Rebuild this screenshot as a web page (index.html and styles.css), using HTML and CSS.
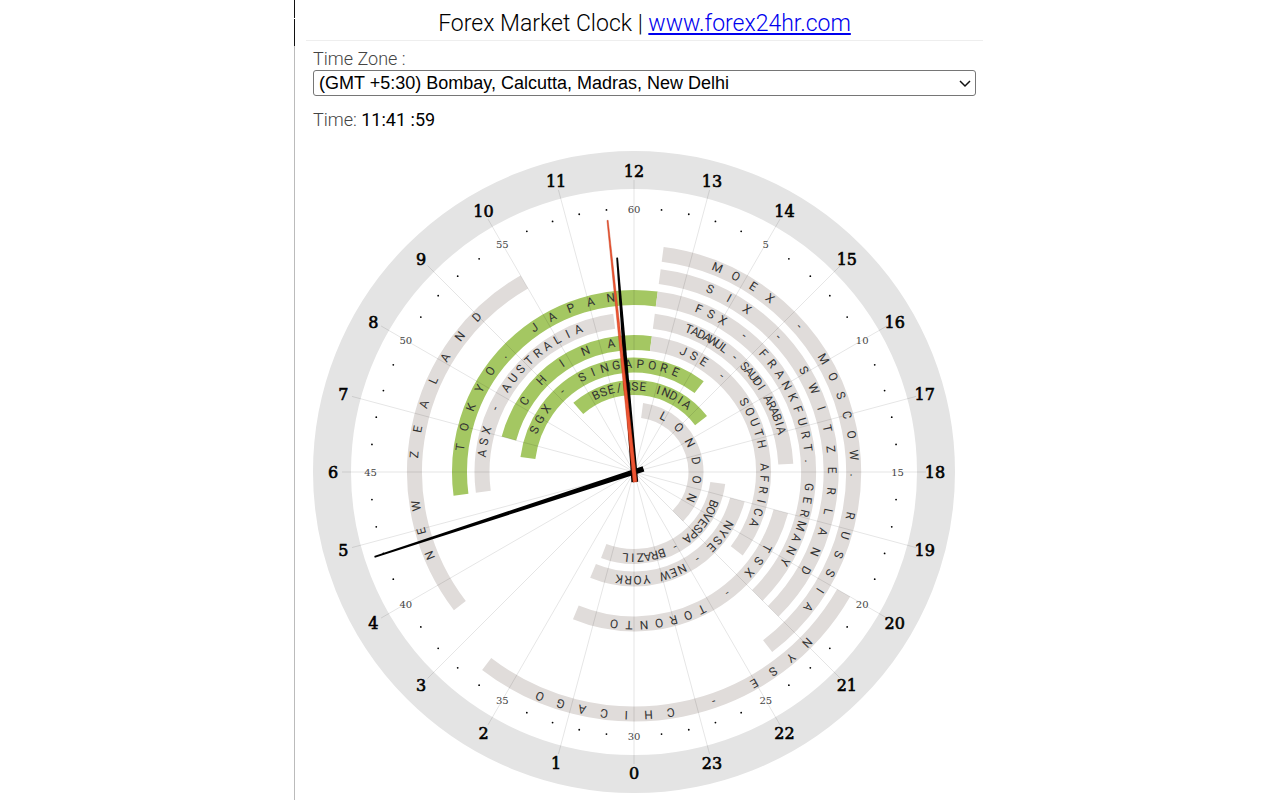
FILE: index.html
```html
<!DOCTYPE html>
<html lang="en">
<head>
    <meta charset="UTF-8">
    <meta name="viewport" content="width=device-width, initial-scale=1.0">
    <title>Forex Market Clock</title>
    <link rel="stylesheet" href="styles.css">
</head>
<body>

    <main class="panel">
        <h1 class="title">Forex Market Clock | <a href="#">www.forex24hr.com</a></h1>

        <div class="content">
            <label class="label" for="timezone">Time Zone :</label>
            <div class="select-wrap">
                <select id="timezone">
                    <option selected>(GMT +5:30) Bombay, Calcutta, Madras, New Delhi</option>
                    <option>(GMT) Western Europe Time, London, Lisbon</option>
                    <option>(GMT -5:00) Eastern Time (US &amp; Canada)</option>
                </select>
                <svg class="chevron" viewBox="0 0 12 8"><path d="M1 1l5 5 5-5"/></svg>
            </div>
            <p class="time">Time: <span class="time-value"></span></p>
            <svg class="clock" viewBox="-321 -321 642 642" role="img" aria-label="24 hour market clock">
                <circle class="ring" r="302"/>
                <g class="bands"></g>
                <g class="spokes"></g>
                <g class="names"></g>
                <g class="minutes"></g>
                <g class="hours"></g>
                <polygon class="hand hand-minute" points="-0.9,-273 0.9,-273 2.8,10 -2.8,10"/>
                <polygon class="hand hand-hour" points="-0.9,-215 0.9,-215 3.4,10 -3.4,10"/>
                <polygon class="hand hand-second" points="-0.6,-253 0.6,-253 2,10 -2,10"/>
            </svg>
        </div>
    </main>

    <script src="clock.js"></script>

</body>
</html>
```
FILE: styles.css
```css
body {
    margin: 0;
    background: #fff;
    color: #000;
    font-family: Roboto, sans-serif;
}

.panel {
    position: relative;
    box-sizing: border-box;
    max-width: 692px;
    min-height: 100vh;
    margin: 0 auto;
    padding: 0 3px 0 12px;
}

/* window edge on the left side */
.panel::before {
    content: "";
    position: absolute;
    top: 0;
    bottom: 0;
    left: 0;
    width: 1px;
    background: linear-gradient(#111 18px, #fff 18px, #fff 19px, #111 19px, #111 46px, #bbb 46px);
}

.title {
    margin: 0;
    height: 40px;
    border-bottom: 1px solid #eee;
    font-size: 23px;
    font-weight: 300;
    line-height: 48px;
    text-align: center;
}

.title a {
    color: #0000ee;
}

.content {
    padding: 7px 7px 0;
}

.label, .time {
    display: block;
    margin: 0;
    font-size: 18px;
    font-weight: 300;
    line-height: 22px;
    color: #444;
}

.select-wrap {
    position: relative;
}

select {
    display: block;
    appearance: none;
    width: 100%;
    height: 26px;
    padding: 0 24px 0 5px;
    border: 1px solid #767676;
    border-radius: 3px;
    background: #fff;
    color: #000;
    font-family: "Liberation Sans", Arial, sans-serif;
    font-size: 18px;
}

.chevron {
    position: absolute;
    top: 10px;
    right: 5px;
    width: 12px;
    height: 8px;
    fill: none;
    stroke: #111;
    stroke-width: 1.5;
    pointer-events: none;
}

.time {
    margin-top: 13px;
}

.time-value {
    color: #000;
    font-weight: 400;
}

.clock {
    display: block;
    width: 100%;
    max-width: 642px;
    margin-top: 20px;
}

.ring {
    fill: #fff;
    stroke: #e4e4e4;
    stroke-width: 38;
}

.band {
    fill: none;
    stroke: #e0dcda;
    stroke-width: 15;
}

.band.open {
    stroke: #a4c762;
}

.spoke {
    stroke: #000;
    stroke-opacity: 0.1;
}

.name {
    fill: #333;
    font-family: Roboto, sans-serif;
    font-size: 12px;
    white-space: pre;
}

.hour-mark, .minute-mark {
    font-family: Georgia, "DejaVu Serif", serif;
    text-anchor: middle;
}

.hour-mark {
    font-size: 16px;
    stroke: #000;
    stroke-width: 0.6;
}

.minute-mark {
    fill: #444;
    font-size: 10px;
}

.dot {
    fill: #000;
}

.hand-second {
    fill: #ee5533;
    stroke: #bb3311;
    stroke-width: 0.4;
}
```
FILE: clock.js
```js
const time = { h: 11, m: 41, s: 59 };

// from / to: opening hours, first / last: where the name starts and ends (degrees from 12)
const markets = [
    { name: 'LONDON', r: 62, from: 7.5, to: 135, first: 27.9, last: 114.1 },
    { name: 'BSE/NSE INDIA', r: 84.5, from: -41.25, to: 52.5, first: -26.3, last: 38.1, open: true },
    { name: 'BOVESPA - BRAZIL', r: 84.5, from: 97.5, to: 201, first: 111.8, last: 185.8 },
    { name: 'SGX - SINGAPORE', r: 107, from: -82.5, to: 37.5, first: -67.1, last: 22.5, open: true },
    { name: 'NYSE - NEW YORK', r: 107, from: 105, to: 202.5, first: 119.5, last: 187.9 },
    { name: 'CHINA', r: 129.5, from: -75, to: 7.5, first: -57, last: -10.1, open: true },
    { name: 'JSE -  SOUTH AFRICA', r: 129.5, from: 7.5, to: 127.5, first: 22.2, last: 113 },
    { name: 'ASX - AUSTRALIA', r: 152, from: -97.5, to: -7.5, first: -83, last: -21.3 },
    { name: 'TADAWUL - SAUDI ARABIA', r: 152, from: 7.5, to: 87, first: 21, last: 74.2 },
    { name: 'TSX - TORONTO', r: 152, from: 105, to: 202.5, first: 119.8, last: 187.5 },
    { name: 'TOKYO. JAPAN', r: 174.5, from: -97.5, to: 7.5, first: -81.9, last: -7.6, open: true },
    { name: 'FSX - FRANKFURT. GERMANY', r: 174.5, from: 7.5, to: 135, first: 21.7, last: 120.8 },
    { name: 'SIX - SWITZERLAND', r: 197, from: 7.5, to: 135, first: 22.6, last: 119.8 },
    { name: 'NEW ZEALAND', r: 219.5, from: -127.5, to: -30, first: -112.2, last: -45.4 },
    { name: 'MOEX - MOSCOW. RUSSIA', r: 219.5, from: 7.5, to: 142.5, first: 22.2, last: 127.8 },
    { name: 'NYSE - CHICAGO', r: 242, from: 120, to: 217.5, first: 134.6, last: 202.8 }
];

const rad = deg => deg * Math.PI / 180;

function point(r, deg) {
    return [r * Math.sin(rad(deg)), -r * Math.cos(rad(deg))];
}

function add(parent, tag, attrs, text) {
    const el = document.createElementNS('http://www.w3.org/2000/svg', tag);
    for (const key in attrs) el.setAttribute(key, attrs[key]);
    if (text !== undefined) el.textContent = text;
    document.querySelector(parent).appendChild(el);
    return el;
}

function drawBand(market) {
    const [x1, y1] = point(market.r, market.from);
    const [x2, y2] = point(market.r, market.to);
    const large = market.to - market.from > 180 ? 1 : 0;
    add('.bands', 'path', {
        class: market.open ? 'band open' : 'band',
        d: `M${x1} ${y1} A${market.r} ${market.r} 0 ${large} 1 ${x2} ${y2}`
    });
}

// every letter takes the same slice of the band and is centered on it
const pen = document.createElement('canvas').getContext('2d');
pen.font = '12px Roboto';

function drawName(market) {
    const letters = [...market.name];
    const step = (market.last - market.first) / (letters.length - 1);
    const xs = [], ys = [], turns = [];

    letters.forEach((letter, i) => {
        const half = pen.measureText(letter).width / 2;
        const deg = market.first + step * i;
        const [x, y] = point(market.r - 3, deg);
        xs.push((x - Math.cos(rad(deg)) * half).toFixed(2));
        ys.push((y - Math.sin(rad(deg)) * half).toFixed(2));
        turns.push(deg.toFixed(2));
    });
    add('.names', 'text', { class: 'name', x: xs.join(' '), y: ys.join(' '), rotate: turns.join(' ') }, market.name);
}

function drawDial() {
    for (let h = 0; h < 24; h++) {
        const deg = (h - 12) * 15;
        const [x, y] = point(301, deg);
        const [sx, sy] = point(292, deg);
        add('.spokes', 'line', { class: 'spoke', x1: 0, y1: 0, x2: sx, y2: sy });
        add('.hours', 'text', { class: 'hour-mark', x: x, y: y + 6 }, h);
    }
    for (let m = 1; m <= 60; m++) {
        const [x, y] = point(263.5, m * 6);
        if (m % 5 === 0) {
            add('.minutes', 'text', { class: 'minute-mark', x: x, y: y + 4 }, m);
        } else {
            add('.minutes', 'circle', { class: 'dot', cx: x, cy: y, r: 0.9 });
        }
    }
}

function setHands() {
    const minutes = time.m + time.s / 60;
    const turn = (hand, deg) => document.querySelector(hand).setAttribute('transform', `rotate(${deg})`);
    turn('.hand-hour', (time.h - 12 + minutes / 60) * 15);
    turn('.hand-minute', minutes * 6);
    turn('.hand-second', time.s * 6);
    document.querySelector('.time-value').textContent = `${time.h}:${time.m} :${time.s}`;
}

markets.forEach(drawBand);
markets.forEach(drawName);
drawDial();
setHands();
```
